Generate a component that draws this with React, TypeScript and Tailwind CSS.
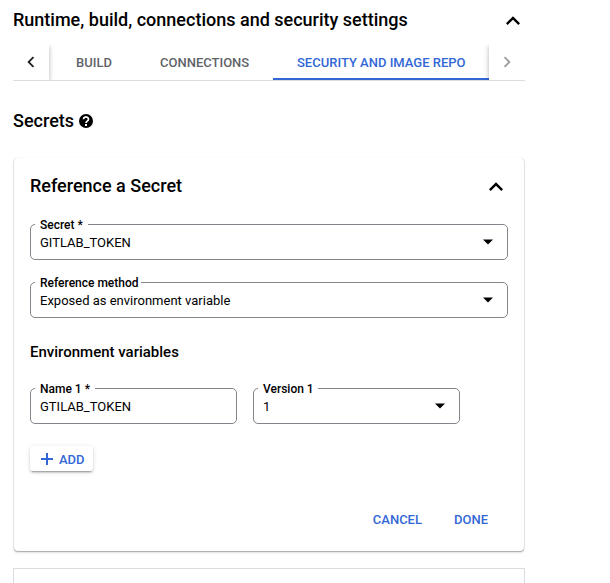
import React from "react";

function Chevron({ className }: { className?: string }) {
  return (
    <svg viewBox="0 0 24 24" className={className} fill="currentColor">
      <path d="M12 8l-6 6 1.41 1.41L12 10.83l4.59 4.58L18 14z" />
    </svg>
  );
}

type FieldProps = {
  label: string;
  value: string;
  notch: string;
  width: string;
  select?: boolean;
};

function Field({ label, value, notch, width, select }: FieldProps) {
  return (
    <div
      className={`relative flex h-9 shrink-0 items-center justify-between rounded-[5px] border border-[#80868b] pr-[13px] pl-[9px] ${width}`}
    >
      <span className={`absolute -top-2 left-1 h-4 bg-white pl-[5px] text-xs leading-4 font-medium whitespace-nowrap ${notch}`}>
        {label}
      </span>
      <span className="pt-[2px] text-[13px] leading-5">{value}</span>
      {select && (
        <svg viewBox="0 0 12 6" className="h-[6px] w-3" fill="currentColor">
          <path d="M1 0.5h10L6 5.5z" />
        </svg>
      )}
    </div>
  );
}

export default function App() {
  return (
    <main className="h-[583px] w-[610px] overflow-hidden bg-white pl-[13px] font-['Roboto',sans-serif] text-black">
      <div className="w-[512px]">
        <header className="flex h-11 items-center justify-between pb-[4px]">
          <h1 className="text-[18px] leading-6 font-medium">Runtime, build, connections and security settings</h1>
          <Chevron className="-mr-[2px] mt-px h-7 w-7" />
        </header>

        <nav className="flex h-[37px] overflow-hidden border-b border-[#dadce0] text-[13px] font-medium text-[#5f6368]">
          <button className="z-10 flex w-9 shrink-0 items-center justify-center bg-white text-[#202124] shadow-[0_2px_5px_rgba(0,0,0,0.3)]">
            <Chevron className="h-[22px] w-[22px] -rotate-90" />
          </button>
          <div className="flex flex-1">
            <span className="flex w-[87px] items-center justify-end pt-[2px] pr-[24px]">BUILD</span>
            <span className="flex w-[137px] items-center pt-[2px] pl-[24px]">CONNECTIONS</span>
            <span className="flex flex-1 items-center border-b-2 border-[#3367d6] pt-1 pl-[24px] whitespace-nowrap text-[#3367d6]">
              SECURITY AND IMAGE REPO
            </span>
          </div>
          <button className="z-10 flex w-9 shrink-0 items-center justify-center bg-white text-[#9e9e9e] shadow-[0_2px_5px_rgba(0,0,0,0.3)]">
            <Chevron className="h-[22px] w-[22px] rotate-90" />
          </button>
        </nav>

        <h2 className="mt-[27px] flex h-6 items-center gap-[5px] text-[18px] font-medium">
          Secrets
          <svg viewBox="0 0 14 14" className="mt-px h-[14px] w-[14px]" fill="none">
            <circle cx="7" cy="7" r="7" fill="black" />
            <path d="M4.5 5.2a2.500 2.200 0 1 1 3.900 1.800C7.500 7.700 7 8 7 9" stroke="white" strokeWidth="1.7" />
            <path d="M6 10h2v2H6z" fill="white" />
          </svg>
        </h2>

        <section className="mx-px mt-[26px] h-[393px] rounded bg-white px-4 pt-4 shadow-[0_1px_0_rgba(0,0,0,0.2),0_2px_2px_rgba(0,0,0,0.12),1px_0_0_rgba(0,0,0,0.07),-1px_0_0_rgba(0,0,0,0.07),0_0_1px_rgba(0,0,0,0.12)]">
          <div className="flex h-6 items-center justify-between">
            <h3 className="text-[18px] leading-6 font-medium">Reference a Secret</h3>
            <Chevron className="-mr-[2px] mt-px h-7 w-7" />
          </div>
          <div className="mt-[26px] flex flex-col gap-[22px]">
            <Field label="Secret *" value="GITLAB_TOKEN" notch="w-[53px]" width="w-[478px]" select />
            <Field label="Reference method" value="Exposed as environment variable" notch="w-[106px]" width="w-[478px]" select />
          </div>
          <h4 className="mt-6 text-[15px] leading-5 font-medium">Environment variables</h4>
          <div className="mt-[26px] flex gap-4">
            <Field label="Name 1 *" value="GTILAB_TOKEN" notch="w-[60px]" width="w-[207px]" />
            <Field label="Version 1" value="1" notch="w-[60px]" width="w-[207px]" select />
          </div>
          <button className="mt-[22px] flex h-[25px] w-[63px] items-center gap-[6px] rounded-[3px] bg-white pl-[11px] text-[13px] font-medium text-[#3367d6] shadow-[0_3px_1px_-2px_rgba(0,0,0,0.2),0_2px_2px_rgba(0,0,0,0.14),0_1px_5px_rgba(0,0,0,0.12)]">
            <svg viewBox="0 0 12 12" className="h-3 w-3" fill="currentColor" shapeRendering="crispEdges">
              <path d="M5 0h2v5h5v2H7v5H5V7H0V5h5z" />
            </svg>
            <span className="pt-[2px]">ADD</span>
          </button>
          <div className="mt-[39px] flex h-5 items-center justify-end gap-8 pr-5 text-[13px] font-medium text-[#3367d6]">
            <button>CANCEL</button>
            <button>DONE</button>
          </div>
        </section>

        <div className="mt-[17px] h-[30px] border border-[#dadce0]" />
      </div>
    </main>
  );
}
